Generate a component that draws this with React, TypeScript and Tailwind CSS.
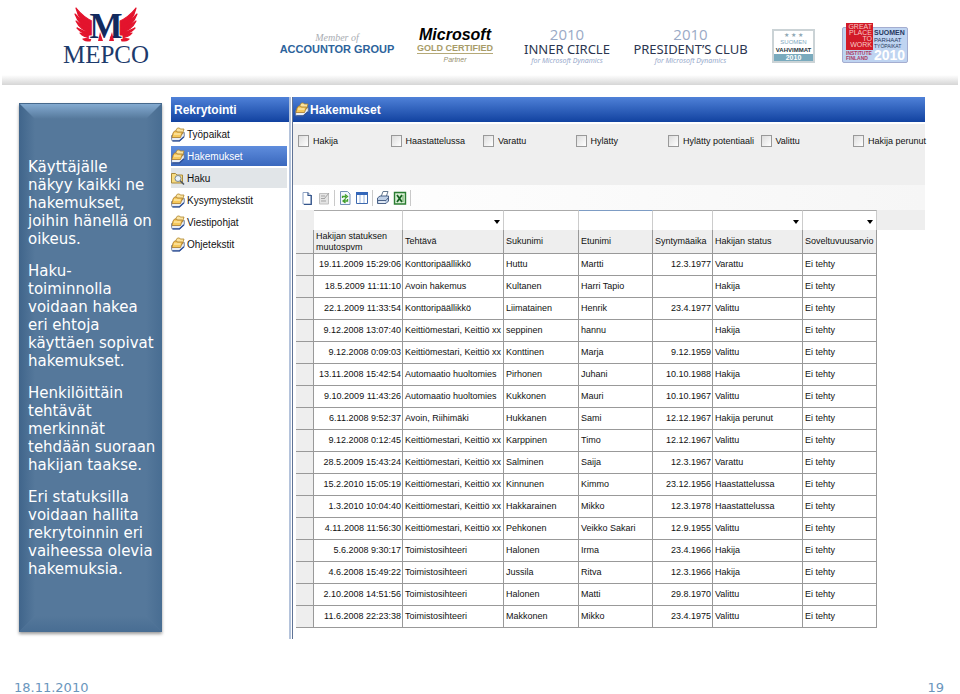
import type { ReactNode } from "react";

const sans = "font-['Liberation_Sans',sans-serif]";
const verdana = "font-['DejaVu_Sans',sans-serif]";

function MepcoLogo() {
  const feathers = [
    "M93 29 Q79 22 76 8 Q84 18 94 22 Z",
    "M93 32 Q79 26 75 14 Q83 23 94 27 Z",
    "M93 34 Q80 30 76 21 Q84 28 93 30 Z",
    "M92 36 Q82 34 77 28 Q84 32 92 33 Z",
    "M91 38 Q83 37 80 33 Q86 35 92 35 Z",
    "M90 41 Q85 41 83 39 Q88 38 91 38 Z",
  ];
  return (
    <svg viewBox="60 4 92 64" className="h-[64px] w-[92px] shrink-0 overflow-visible" role="img" aria-label="MEPCO">
      <g fill="#e3142d" stroke="#e3142d" strokeWidth="1.2" strokeLinejoin="round">
        {feathers.map((d) => <path key={d} d={d} />)}
        <g transform="translate(212 0) scale(-1 1)">
          {feathers.map((d) => <path key={d} d={d} />)}
        </g>
      </g>
      <text x="106" y="38" textAnchor="middle" fontSize="35" fontWeight="700" fill="#122a5e" stroke="#fff" strokeWidth="2" paintOrder="stroke" fontFamily="Liberation Serif, serif">M</text>
      <path d="M98 41L100 32L103 41Z M109 41L112 32L114 41Z" fill="#e3142d" />
      <text x="106" y="63" textAnchor="middle" fontSize="25" fill="#1d3a6b" fontFamily="Liberation Serif, serif">MEPCO</text>
    </svg>
  );
}

function Award({ name }: { name: string }) {
  return (
    <div className="flex flex-col items-center font-['Open_Sans',sans-serif] whitespace-nowrap">
      <span className="text-[15px] leading-[16px] text-[#9aaac6]">2010</span>
      <span className="font-['Noto_Sans',sans-serif] text-[13px] leading-[14px] text-[#2c3650]">{name}</span>
      <span className="text-[7px] leading-[10px] text-[#8fa3c8] italic">for Microsoft Dynamics</span>
    </div>
  );
}

function Header() {
  return (
    <header className="flex h-[85px] items-start bg-white pl-[60px]">
      <div className="pt-[4px]"><MepcoLogo /></div>
      <div className="ml-[127px] flex w-[116px] flex-col items-center pt-[32px] whitespace-nowrap">
        <span className="font-['Liberation_Serif',serif] text-[10px] leading-[11px] text-[#a9adb3] italic">Member of</span>
        <span className={`${sans} text-[11px] leading-[12px] font-bold text-[#2d639b]`}>ACCOUNTOR GROUP</span>
      </div>
      <div className={`${sans} ml-[21px] flex w-[78px] flex-col items-center pt-[26px] whitespace-nowrap`}>
        <span className="text-[16px] leading-[17px] font-bold text-black italic">Microsoft</span>
        <span className="border-b border-[#b5a978] text-[9px] leading-[10px] font-bold text-[#a79b68]">GOLD CERTIFIED</span>
        <span className="text-[7px] leading-[12px] text-[#96906f] italic">Partner</span>
      </div>
      <div className="ml-[29px] flex w-[88px] justify-center pt-[26px]"><Award name="INNER CIRCLE" /></div>
      <div className="ml-[25px] flex w-[109px] justify-center pt-[26px]"><Award name="PRESIDENT’S CLUB" /></div>
      <div className={`${sans} mt-[29px] ml-[27px] flex h-[34px] w-[43px] flex-col items-center border-2 border-[#cbd3d6] bg-white whitespace-nowrap`}>
        <span className="text-[6px] leading-[8px] text-[#8fa7b4]">★ ★ ★</span>
        <span className="text-[6px] leading-[7px] text-[#81aabf]">SUOMEN</span>
        <span className="text-[6px] leading-[8px] font-bold text-[#26343c]">VAHVIMMAT</span>
        <span className="w-full bg-[#79aabd] text-center text-[7px] leading-[7px] font-bold text-white">2010</span>
      </div>
      <div className={`${sans} mt-[23px] ml-[27px] flex h-[40px] w-[66px] items-end whitespace-nowrap`}>
        <div className="flex h-[36px] w-full rounded-[2px] border border-[#a4add0] bg-[#bfd4f1]">
          <div className="-mt-[5px] flex w-[30px] flex-col pl-[3px]">
            <div className="flex h-[27px] flex-col items-end bg-[#d21a28] pt-[1px] pr-[1px] text-[7px] leading-[6px] text-[#f7c9c5]">
              <span>GREAT</span><span>PLACE</span><span>TO</span><span>WORK</span>
            </div>
            <span className="text-[5px] leading-[6px] font-bold text-[#aa3a63]">INSTITUTE</span>
            <span className="text-[5px] leading-[5px] font-bold text-[#aa3a63]">FINLAND</span>
          </div>
          <div className="flex flex-col pl-[1px] text-[#26395f]">
            <span className="pt-[1px] text-[7px] leading-[8px] font-bold">SUOMEN</span>
            <span className="text-[6px] leading-[6px]">PARHAAT</span>
            <span className="text-[5px] leading-[6px]">TYÖPAIKAT</span>
            <span className="text-[14px] leading-[12px] font-bold text-white">2010</span>
          </div>
        </div>
      </div>
    </header>
  );
}

function InfoPanel() {
  return (
    <aside className={`${verdana} relative mt-[18px] flex h-[529px] w-[143px] shrink-0 flex-col gap-[14px] bg-[#55789b] pt-[55px] pl-[9px] text-[15px] leading-[18px] whitespace-nowrap text-white shadow-[0_2px_3px_#00000066]`}>
      <svg className="absolute inset-0 h-full w-full" viewBox="0 0 143 529" preserveAspectRatio="none" aria-hidden="true">
        <defs>
          <linearGradient id="bevelTop" x1="0" y1="0" x2="0" y2="1">
            <stop offset="0" stopColor="#87aed4" />
            <stop offset="1" stopColor="#55789b" />
          </linearGradient>
          <linearGradient id="bevelLeft" x1="0" y1="0" x2="1" y2="0">
            <stop offset="0" stopColor="#40658b" />
            <stop offset="1" stopColor="#55789b" />
          </linearGradient>
          <linearGradient id="bevelRight" x1="1" y1="0" x2="0" y2="0">
            <stop offset="0" stopColor="#486d92" />
            <stop offset="1" stopColor="#55789b" />
          </linearGradient>
          <linearGradient id="bevelBottom" x1="0" y1="1" x2="0" y2="0">
            <stop offset="0" stopColor="#486d93" />
            <stop offset="1" stopColor="#55789b" />
          </linearGradient>
        </defs>
        <path d="M0 0L16 16V513L0 529Z" fill="url(#bevelLeft)" />
        <path d="M143 0L127 16V513L143 529Z" fill="url(#bevelRight)" />
        <path d="M0 0H143L127 16H16Z" fill="url(#bevelTop)" />
        <path d="M0 529H143L127 513H16Z" fill="url(#bevelBottom)" />
        <path d="M0 0.500H143" stroke="#46698c" />
      </svg>
      <p className="relative">Käyttäjälle<br />näkyy kaikki ne<br />hakemukset,<br />joihin hänellä on<br />oikeus.</p>
      <p className="relative">Haku-<br />toiminnolla<br />voidaan hakea<br />eri ehtoja<br />käyttäen sopivat<br />hakemukset.</p>
      <p className="relative">Henkilöittäin<br />tehtävät<br />merkinnät<br />tehdään suoraan<br />hakijan taakse.</p>
      <p className="relative">Eri statuksilla<br />voidaan hallita<br />rekrytoinnin eri<br />vaiheessa olevia<br />hakemuksia.</p>
    </aside>
  );
}

function CardsIcon() {
  return (
    <svg viewBox="0 0 14 15" className="h-[15px] w-[14px] shrink-0" aria-hidden="true">
      <path d="M.6 8.500V12.500Q.6 14 2 14H8.500L13.300 9.500V5.500Z" fill="#e9eef6" stroke="#5b6c8c" strokeWidth=".8" />
      <path d="M1.500 13.800H8.500L13 9.800" stroke="#2a4e9b" strokeWidth="1.300" fill="none" />
      <path d="M5 3L6.500 1H8.500L9.200 2H13L11.500 7H4Z" fill="#fbe3a0" stroke="#b0872c" strokeWidth=".8" />
      <path d="M2 6L3.500 4H5.500L6.200 5H11.500L9.500 10.500H1Z" fill="#f6c95c" stroke="#a8792a" strokeWidth=".8" />
      <path d="M3 7H9.500" stroke="#fff3c9" />
    </svg>
  );
}

function SearchFolderIcon() {
  return (
    <svg viewBox="0 0 14 15" className="h-[15px] w-[14px] shrink-0" aria-hidden="true">
      <path d="M.500 2.500H4.500L6 4H11.500V12H.500Z" fill="#f7dc83" stroke="#a8893a" />
      <circle cx="7" cy="7.500" r="3" fill="#e5f1fb" stroke="#7b8791" />
      <path d="M9.200 9.800L13 13.500" stroke="#4d5763" strokeWidth="1.600" />
    </svg>
  );
}

const navItems = [
  { label: "Työpaikat" },
  { label: "Hakemukset", selected: true },
  { label: "Haku", search: true },
  { label: "Kysymystekstit" },
  { label: "Viestipohjat" },
  { label: "Ohjetekstit" },
];

function SideNav() {
  return (
    <nav className={`${sans} mt-[12px] ml-[9px] w-[118px] shrink-0`}>
      <h2 className="h-[25px] bg-linear-to-b from-[#4f81d8] to-[#1142a0] pl-[3px] text-[12px] leading-[26px] font-bold text-white">Rekrytointi</h2>
      <ul className="flex flex-col gap-[2px] pt-[2px] pr-[2px]">
        {navItems.map((item) => (
          <li key={item.label}>
            <a
              href="#"
              className={`flex h-[20px] items-center gap-[2px] text-[10px] ${
                item.selected ? "bg-linear-to-b from-[#5f8ddd] to-[#3a68bd] text-white" : item.search ? "bg-[#e1e5e8] text-[#111]" : "text-[#111]"
              }`}
            >
              {item.search ? <SearchFolderIcon /> : <CardsIcon />}
              {item.label}
            </a>
          </li>
        ))}
      </ul>
    </nav>
  );
}

function ToolButton({ label, children }: { label: string; children: ReactNode }) {
  return (
    <button type="button" aria-label={label} className="h-[16px] w-[14px]">
      <svg viewBox="0 0 14 16" className="h-[16px] w-[14px]" aria-hidden="true">{children}</svg>
    </button>
  );
}

function Toolbar() {
  const separator = <span className="h-[16px] w-px bg-[#c9c9c9]" />;
  return (
    <div className="flex h-[25px] items-center gap-[3px] bg-linear-to-r from-white to-[#f6f6f6] pl-[4px]">
      <ToolButton label="Uusi">
        <path d="M3 2.500H8L11 5.500V14H3Z" fill="#fff" stroke="#8fa3c4" /><path d="M8 2.500V5.500H11.300V14.500H4" fill="none" stroke="#34558b" strokeWidth="1.200" />
      </ToolButton>
      <ToolButton label="Muokkaa">
        <path d="M2.500 3.500H11.500V14H2.500Z" fill="#e4e4e4" stroke="#c0c0c0" /><path d="M4 6H8M4 8.500H8M4 11H9M7 9L12 3" stroke="#a3a3a3" />
      </ToolButton>
      {separator}
      <ToolButton label="Päivitä">
        <path d="M2.500 1.500H9.500L12 4V14.500H2.500Z" fill="#f1f6fd" stroke="#7490b8" /><path d="M4.500 8V6.500H8M7 4.500L9.500 6.500L7 8.500M9.500 9V11H6M7.500 9L5 11L7.500 13" fill="none" stroke="#42a02c" strokeWidth="1.300" />
      </ToolButton>
      <ToolButton label="Sarakkeet">
        <path d="M1.500 2.500H12.500V13.500H1.500Z" fill="#fff" stroke="#3d69ae" /><path d="M1 3.500H13" stroke="#3467ba" strokeWidth="3" /><path d="M5 5V13M9 5V13" stroke="#9bb8e2" />
      </ToolButton>
      {separator}
      <ToolButton label="Tulosta">
        <path d="M5 7L7 1.500H12L10 7" fill="#fff" stroke="#657991" /><path d="M1.500 8L4 6H12.500V11L10 13.500H1.500Z" fill="#bfd0e7" stroke="#4b6287" /><path d="M2 10.500H10L12 8" fill="none" stroke="#4b6287" /><path d="M3 12H9" stroke="#fff" />
      </ToolButton>
      <ToolButton label="Vie Exceliin">
        <path d="M1.500 2.500H12.500V14H1.500Z" fill="#d9efd5" stroke="#2b7d32" strokeWidth="1.400" /><path d="M4 5L9 12M9 5L4 12" stroke="#176322" strokeWidth="1.800" /><path d="M10 5V12" stroke="#68a961" />
      </ToolButton>
      {separator}
    </div>
  );
}

const statuses = ["Hakija", "Haastattelussa", "Varattu", "Hylätty", "Hylätty potentiaali", "Valittu", "Hakija perunut"];

const columns = [
  { label: "Hakijan statuksen muutospvm", filter: "text" },
  { label: "Tehtävä", filter: "select" },
  { label: "Sukunimi", filter: "text" },
  { label: "Etunimi", filter: "text", active: true },
  { label: "Syntymäaika", filter: "text" },
  { label: "Hakijan status", filter: "select" },
  { label: "Soveltuvuusarvio", filter: "select" },
];

const rows = [
  ["19.11.2009 15:29:06", "Konttoripäällikkö", "Huttu", "Martti", "12.3.1977", "Varattu"],
  ["18.5.2009 11:11:10", "Avoin hakemus", "Kultanen", "Harri Tapio", "", "Hakija"],
  ["22.1.2009 11:33:54", "Konttoripäällikkö", "Liimatainen", "Henrik", "23.4.1977", "Valittu"],
  ["9.12.2008 13:07:40", "Keittiömestari, Keittiö xx", "seppinen", "hannu", "", "Hakija"],
  ["9.12.2008 0:09:03", "Keittiömestari, Keittiö xx", "Konttinen", "Marja", "9.12.1959", "Valittu"],
  ["13.11.2008 15:42:54", "Automaatio huoltomies", "Pirhonen", "Juhani", "10.10.1988", "Hakija"],
  ["9.10.2009 11:43:26", "Automaatio huoltomies", "Kukkonen", "Mauri", "10.10.1967", "Valittu"],
  ["6.11.2008 9:52:37", "Avoin, Riihimäki", "Hukkanen", "Sami", "12.12.1967", "Hakija perunut"],
  ["9.12.2008 0:12:45", "Keittiömestari, Keittiö xx", "Karppinen", "Timo", "12.12.1967", "Valittu"],
  ["28.5.2009 15:43:24", "Keittiömestari, Keittiö xx", "Salminen", "Saija", "12.3.1967", "Varattu"],
  ["15.2.2010 15:05:19", "Keittiömestari, Keittiö xx", "Kinnunen", "Kimmo", "23.12.1956", "Haastattelussa"],
  ["1.3.2010 10:04:40", "Keittiömestari, Keittiö xx", "Hakkarainen", "Mikko", "12.3.1978", "Haastattelussa"],
  ["4.11.2008 11:56:30", "Keittiömestari, Keittiö xx", "Pehkonen", "Veikko Sakari", "12.9.1955", "Valittu"],
  ["5.6.2008 9:30:17", "Toimistosihteeri", "Halonen", "Irma", "23.4.1966", "Hakija"],
  ["4.6.2008 15:49:22", "Toimistosihteeri", "Jussila", "Ritva", "12.3.1966", "Hakija"],
  ["2.10.2008 14:51:56", "Toimistosihteeri", "Halonen", "Matti", "29.8.1970", "Valittu"],
  ["11.6.2008 22:23:38", "Toimistosihteeri", "Makkonen", "Mikko", "23.4.1975", "Valittu"],
];

function ApplicationsTable() {
  return (
    <table className="w-full table-fixed border-separate border-spacing-0 text-left text-[9px] leading-[11px] whitespace-nowrap text-[#111]">
      <colgroup>
        <col className="w-[18px]" />
        <col className="w-[89px]" />
        <col className="w-[101px]" />
        <col className="w-[75px]" />
        <col className="w-[74px]" />
        <col className="w-[60px]" />
        <col className="w-[90px]" />
        <col className="w-[74px]" />
        <col />
      </colgroup>
      <thead>
        <tr className="h-[20px] bg-[#eee]">
          <td className="p-0" />
          {columns.map((c) => (
            <td key={c.label} className={`relative border-t border-r border-r-[#ccc] bg-white p-0 ${c.active ? "border-t-[#7d9cc4]" : "border-t-[#aaa]"}`}>
              {c.filter === "select" ? (
                <>
                  <select aria-label={c.label} className="block h-[19px] w-full appearance-none bg-transparent"><option></option></select>
                  <svg viewBox="0 0 6 4" className="pointer-events-none absolute top-[9px] right-[3px] h-[4px] w-[6px]" aria-hidden="true"><path d="M0 0H6L3 4Z" fill="#000" /></svg>
                </>
              ) : (
                <input type="text" aria-label={c.label} className="block h-[19px] w-full bg-transparent" />
              )}
            </td>
          ))}
          <td className="p-0" />
        </tr>
        <tr className="h-[24px]">
          <td className="border-r border-b border-[#999] bg-[#eee] p-0" />
          {columns.map((c) => (
            <th key={c.label} scope="col" className="border-r border-b border-[#999] bg-[#eee] py-0 pr-0 pl-[2px] font-normal whitespace-normal">{c.label}</th>
          ))}
          <td className="p-0" />
        </tr>
      </thead>
      <tbody>
        {rows.map((row) => (
          <tr key={row[0]} className="h-[22px]">
            <td className="border-r border-b border-[#999] bg-[#eee] p-0" />
            {[...row, "Ei tehty"].map((cell, i) => (
              <td key={i} className={`border-r border-b border-[#999] py-0 ${i === 0 || i === 4 ? "pr-[1px] pl-0 text-right" : "pr-0 pl-[2px]"}`}>{cell}</td>
            ))}
          </tr>
        ))}
      </tbody>
    </table>
  );
}

function Applications() {
  return (
    <section className={`${sans} mt-[12px] mr-[35px] flex h-[542px] min-w-0 flex-1`}>
      <div className="w-[4px] shrink-0 border-r border-l-2 border-r-[#5f7396] border-l-[#b4c3db] bg-white" />
      <div className="min-w-0 flex-1">
        <h1 className="flex h-[25px] items-center gap-[1px] bg-linear-to-b from-[#4f81d8] to-[#1142a0] pl-[2px] text-[12px] font-bold text-white"><CardsIcon />Hakemukset</h1>
        <div className="grid h-[63px] grid-cols-[repeat(6,minmax(0,1fr))_72px] items-start border-t-2 border-white bg-[#efefef] pt-[10px] pl-[5px]">
          {statuses.map((s) => (
            <label key={s} className="flex items-center gap-[4px] text-[9px] leading-[14px] whitespace-nowrap text-[#111]">
              <input type="checkbox" className="h-[12px] w-[11px] shrink-0 appearance-none border border-[#999] bg-linear-to-br from-[#ddd] to-white" />
              {s}
            </label>
          ))}
        </div>
        <div className="pl-[3px]">
          <Toolbar />
          <ApplicationsTable />
        </div>
      </div>
    </section>
  );
}

export default function App() {
  return (
    <div className="min-h-screen bg-white">
      <Header />
      <div className="mx-[2px] -mt-[10px] h-[10px] bg-linear-to-b from-white to-[#d6d6d6]" />
      <main className="flex items-start pl-[19px]">
        <InfoPanel />
        <SideNav />
        <Applications />
      </main>
      <footer className={`${verdana} mt-[43px] flex justify-between pr-[16px] pl-[14px] text-[13px] leading-[12px] text-[#6a96bd]`}>
        <span>18.11.2010</span>
        <span>19</span>
      </footer>
    </div>
  );
}
